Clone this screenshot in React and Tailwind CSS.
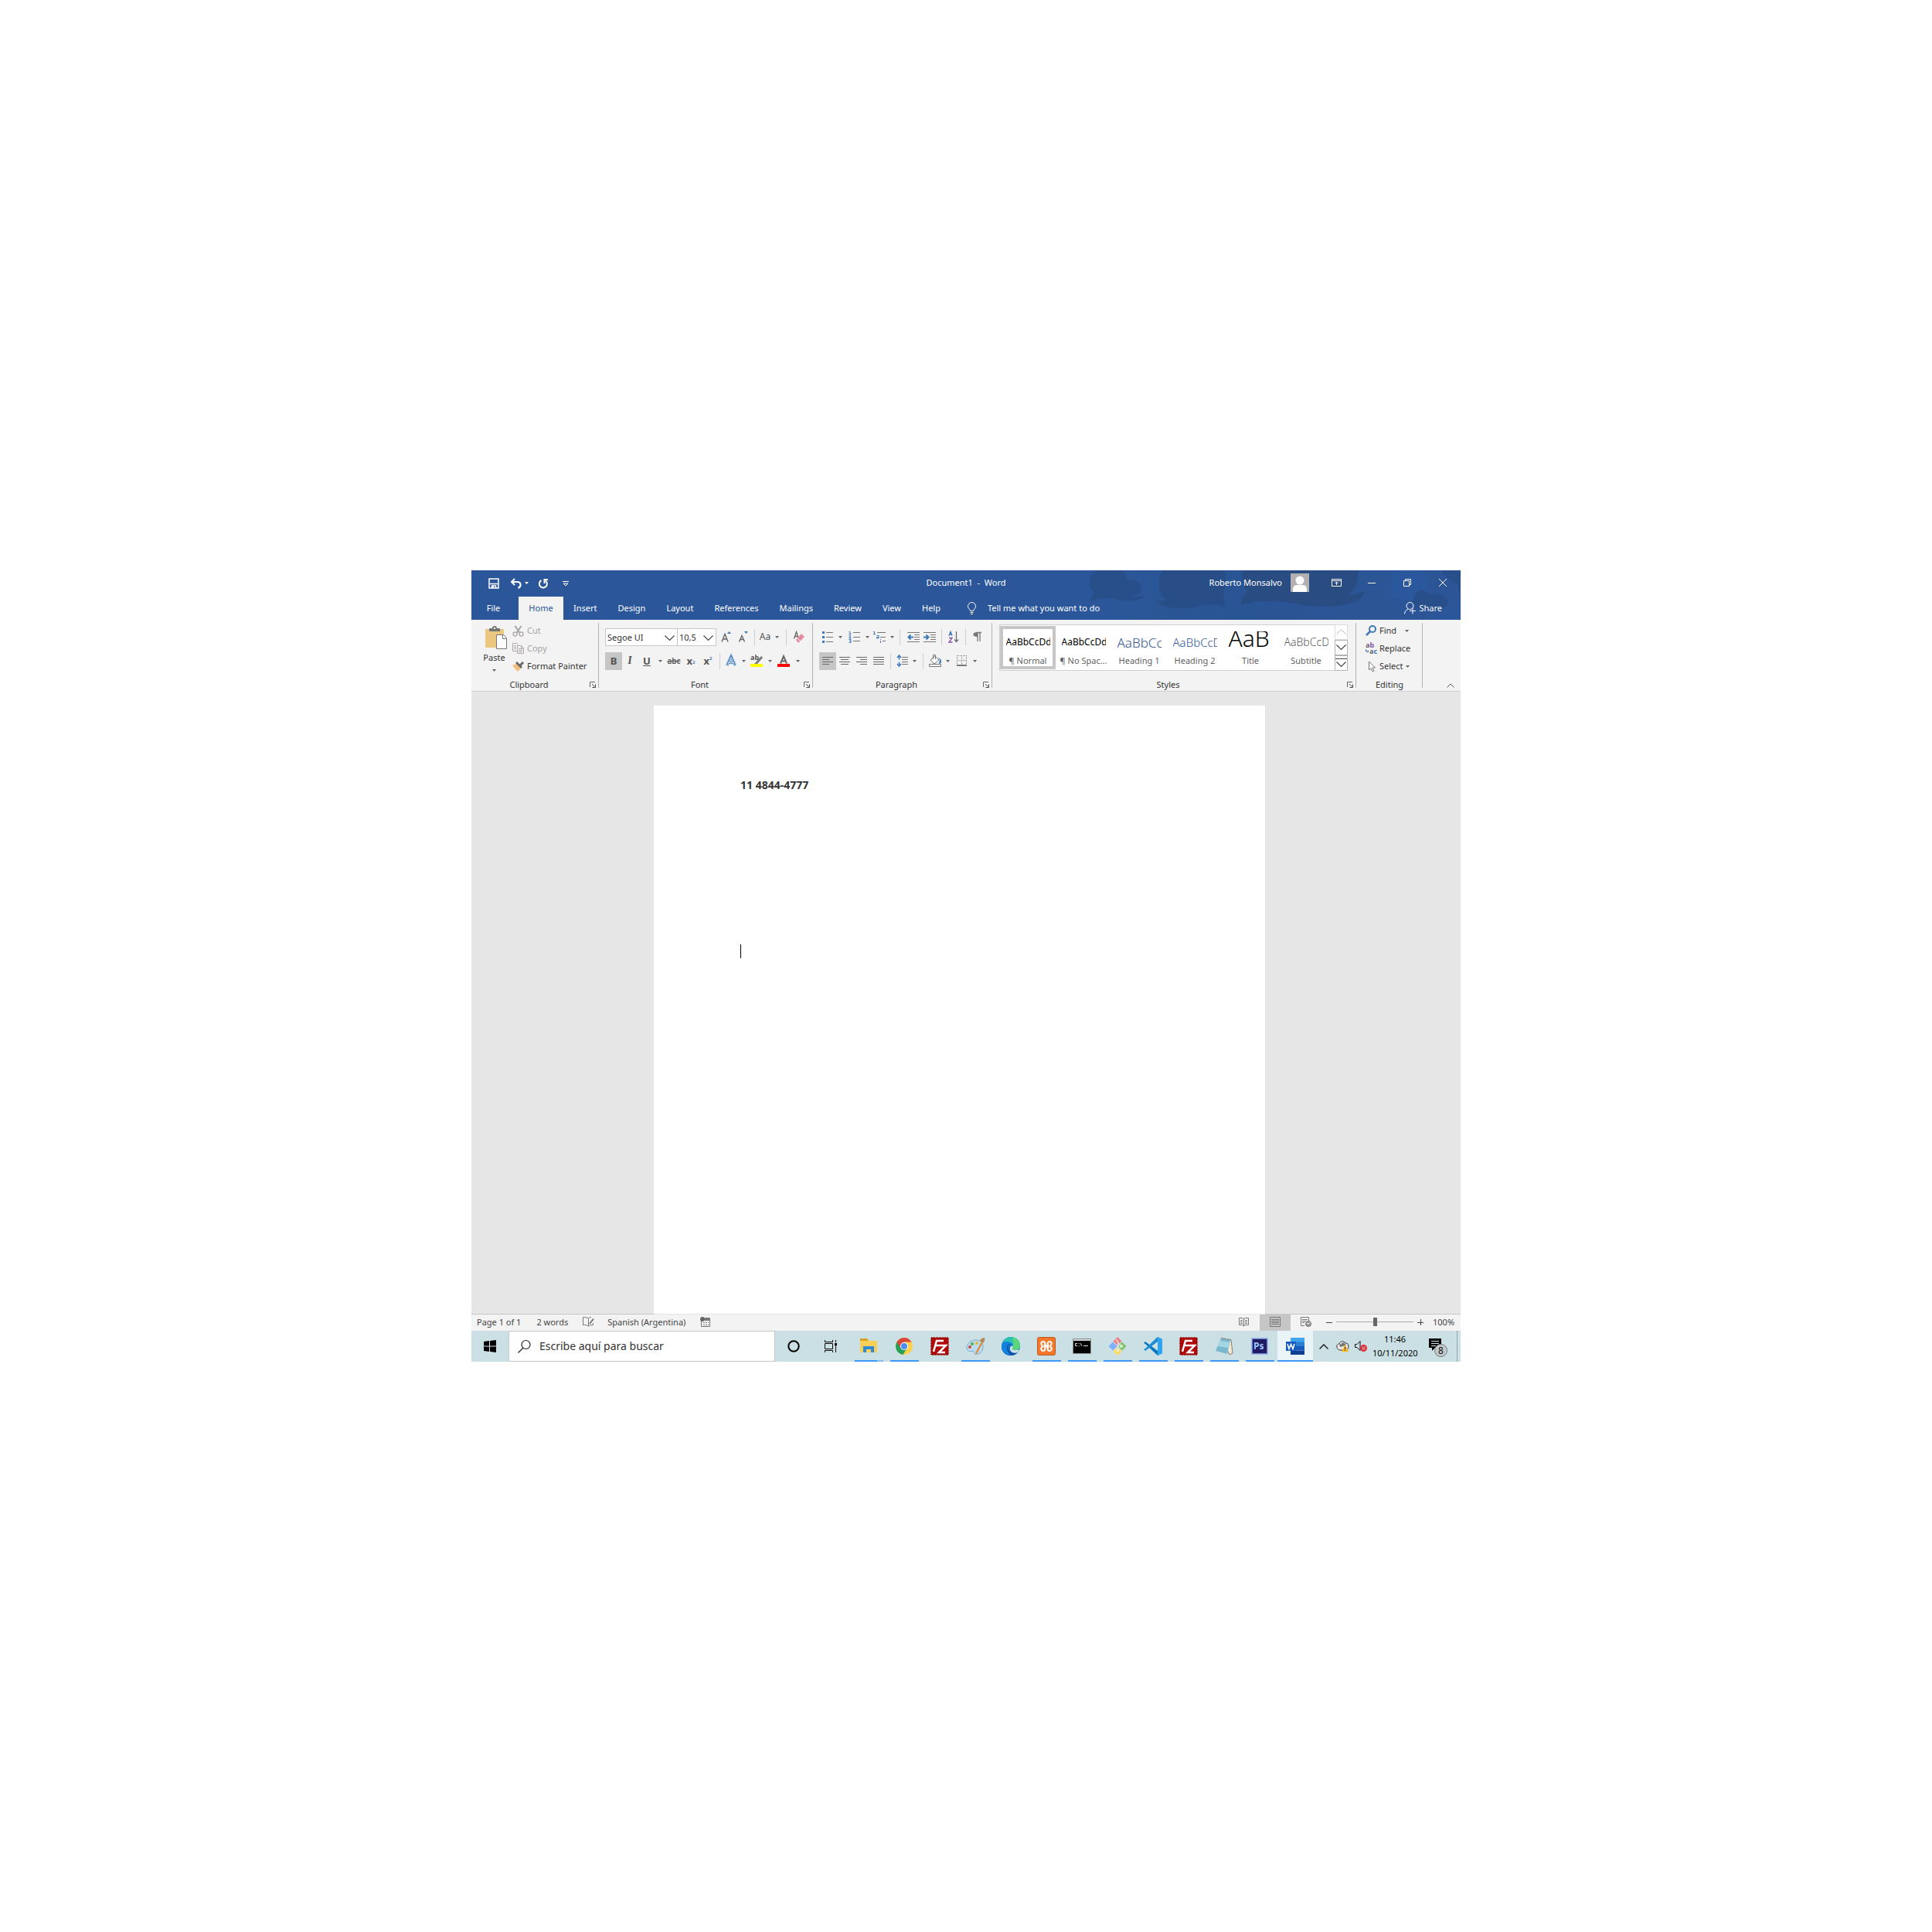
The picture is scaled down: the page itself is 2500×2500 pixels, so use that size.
import React from "react";

/* ---------- shared pieces ---------- */

function Svg({ w, h, children, className = "" }) {
  return (
    <svg width={w} height={h} viewBox={`0 0 ${w} ${h}`} fill="none" className={`shrink-0 overflow-visible ${className}`} aria-hidden="true">
      {children}
    </svg>
  );
}

function Btn({ label, className = "", children, ...rest }) {
  return (
    <button type="button" aria-label={label} className={`flex h-[23px] shrink-0 items-center justify-center pb-px ${className}`} {...rest}>
      {children}
    </button>
  );
}

const Caret = ({ color = "#666" }) => (
  <Svg w={5} h={3}><path d="M0 0h5L2.5 3z" fill={color} /></Svg>
);

const Rule = ({ className }) => (
  <span className={`flex h-[21px] shrink-0 justify-center ${className}`}>
    <span className="w-px bg-[#d0d0d0]" />
  </span>
);

function Group({ title, launcher = true, className = "", children }) {
  return (
    <section aria-label={title} className={`relative flex flex-col ${className}`}>
      <div className="h-[76px]">{children}</div>
      <div className="flex h-4 items-center">
        <span className="flex-1 text-center text-[#333]">{title}</span>
        {launcher && (
          <button type="button" aria-label={`${title} settings`} className="flex w-4 justify-start pl-1">
            <Svg w={8} h={8}>
              <path d="M.5 7V.5H7" stroke="#666" />
              <path d="M3 3l3.500 3.500M7.500 3.500v4h-4" stroke="#444" />
            </Svg>
          </button>
        )}
      </div>
      <span className="absolute right-0 top-1 h-[84px] w-px bg-[#b4b4b4]" />
    </section>
  );
}

/* ---------- title bar ---------- */

function HeaderArt() {
  return (
    <svg viewBox="0 0 490 64" width="490" height="64" className="pointer-events-none absolute right-0 top-0" aria-hidden="true">
      <defs>
        <linearGradient id="fade" x1="0" x2="1" y1="0" y2="0">
          <stop offset="0" stopColor="#2b579a" />
          <stop offset=".25" stopColor="#2a5595" />
          <stop offset="1" stopColor="#2b5596" />
        </linearGradient>
      </defs>
      <path d="M0 0h490v40L440 64H60z" fill="url(#fade)" />
      <path d="M20 0h33c4 4 5 8 5 13 8-1 19 1 19 10 0 7-7 10-14 11 6 1 12 0 18-1-4 5-15 7-28 6-14-3-28-5-42 1 1-6 3-8 6-11-6-3-8-10-7-17 1-6 5-10 10-12z" fill="#284f8a" />
      <path d="M104 0h80c5 12 1 25-1 32l2 16c-9-5-21-4-31-2-21 6-49 4-59-7 6 1 11 1 15 0-12-8-12-27-6-39z" fill="#294e87" />
      <path d="M208 0h150c0 12-2 25-15 33 11-1 17-4 23-6-2 8-8 13-17 15-20 6-42 6-64 3-26-6-56-8-79 0 1-8 3-13 9-17-8-7-9-18-7-28z" fill="#294c83" />
      <path d="M405 0h31c8 4 12 12 13 22 0 10-12 20-32 16l-17-2V15c1-6 2-11 5-15z" fill="#2b589c" />
      <path d="M430 33c3-8 15-9 20-2 9-1 20 1 23 8 0 8-7 12-15 12h-20c-8-2-12-10-8-18zM466 0h24v31c-3-3-4-9-3-14-7-1-17-7-21-17z" fill="#294f8b" />
    </svg>
  );
}

function TitleBar() {
  return (
    <div className="relative grid h-[34px] grid-cols-[1fr_auto_1fr] items-center pb-0.5">
      <div className="flex items-center pl-[22px] pt-px">
        <button type="button" aria-label="Save">
          <Svg w={14} h={14}>
            <path d="M1 1h12v12H1z" stroke="#fff" strokeWidth="1.500" />
            <path d="M2 7.500h10M4.500 13v-3h5v3" stroke="#fff" strokeWidth="1.500" />
            <path d="M5 10.500h2V13H5z" fill="#fff" />
          </Svg>
        </button>
        <button type="button" aria-label="Undo" className="ml-[14px]">
          <Svg w={15} h={14}>
            <path d="M2 5h7.500c5 0 5.500 6 1 8" stroke="#fff" strokeWidth="2" />
            <path d="M6 1L2 5l4 4" stroke="#fff" strokeWidth="2" />
          </Svg>
        </button>
        <button type="button" aria-label="Undo options" className="ml-1"><Caret color="#fff" /></button>
        <button type="button" aria-label="Redo" className="ml-3">
          <Svg w={14} h={14}>
            <path d="M4.500 3a5 5 0 1 0 5.500.5" stroke="#fff" strokeWidth="2" />
            <path d="M8.500 7V2H13" stroke="#fff" strokeWidth="2" />
          </Svg>
        </button>
        <button type="button" aria-label="Customize toolbar" className="ml-[18px]">
          <Svg w={8} h={8}><path d="M0 1.500h8M1 4l3 3 3-3z" stroke="#fff" /></Svg>
        </button>
      </div>
      <h1 className="whitespace-pre">Document1  -  Word</h1>
      <div className="flex items-center justify-end">
        <button type="button" className="flex items-center">
          Roberto Monsalvo
          <Svg w={24} h={24} className="ml-[11px] mr-3">
            <path d="M0 0h24v24H0z" fill="#b1b1b1" />
            <circle cx="12" cy="9" r="5.500" fill="#fff" />
            <path d="M3 24v-3c0-4 2-6 5-6h8c3 0 5 2 5 6v3z" fill="#fff" />
          </Svg>
        </button>
        <button type="button" aria-label="Ribbon display options" className="flex h-8 w-[46px] items-center justify-center">
          <Svg w={13} h={10}><path d="M.5.500h12v9H.5zM.5 2.500h12M6.500 8V4M4.500 6l2-2 2 2" stroke="#fff" /></Svg>
        </button>
        <button type="button" aria-label="Minimize" className="flex h-8 w-[46px] items-center justify-center">
          <Svg w={10} h={1}><path d="M0 0h10v1H0z" fill="#fff" /></Svg>
        </button>
        <button type="button" aria-label="Restore" className="flex h-8 w-[46px] items-center justify-center">
          <Svg w={10} h={10}><path d="M.5 2.500h7v7h-7zM2.500 2.500v-2h7v7h-2" stroke="#fff" /></Svg>
        </button>
        <button type="button" aria-label="Close" className="flex h-8 w-[46px] items-center justify-center">
          <Svg w={10} h={10}><path d="M0 0l10 10M10 0L0 10" stroke="#fff" /></Svg>
        </button>
      </div>
    </div>
  );
}

const TABS = ["Insert", "Design", "Layout", "References", "Mailings", "Review", "View", "Help"];

function TabBar() {
  return (
    <nav className="relative flex h-[30px] items-stretch">
      <button type="button" className="w-[61px] pr-1">File</button>
      <button type="button" className="w-[58px] bg-[#f3f3f3] text-[#2b579a]">Home</button>
      <div className="flex gap-px">
        {TABS.map((t) => (
          <button key={t} type="button" className="px-[13px]">{t}</button>
        ))}
      </div>
      <button type="button" className="ml-[22px] flex items-center gap-[15px]">
        <Svg w={11} h={16}>
          <path d="M3.500 11.500c0-2-3-3-3-6a5 5 0 0 1 10 0c0 3-3 4-3 6zM3.500 13.500h4M4 15.500h3" stroke="#fff" />
        </Svg>
        Tell me what you want to do
      </button>
      <button type="button" className="ml-auto mr-6 flex items-center gap-1">
        <Svg w={15} h={16}>
          <circle cx="7.500" cy="5" r="4.500" stroke="#fff" />
          <path d="M.5 15.500c0-3 2-5 4.500-6.500M11 7.500v8M7 11.500h8" stroke="#fff" />
        </Svg>
        Share
      </button>
    </nav>
  );
}

/* ---------- ribbon ---------- */

function Clipboard() {
  return (
    <Group title="Clipboard" className="w-[165px]">
      <div className="flex">
        <button type="button" className="flex w-[53px] flex-col items-center pl-1.5 pt-2 text-[#333]">
          <Svg w={28} h={30} className="ml-1">
            <path d="M0 4h24v24H0z" fill="#ecc77f" />
            <path d="M5 3h4a3 3 0 0 1 6 0h4v4H5z" fill="#767676" />
            <path d="M11 2h2v2h-2z" fill="#f3f3f3" />
            <path d="M14.500 11.500h9l4 4v14h-13z" fill="#fff" stroke="#777" />
            <path d="M22.500 11.500v5h5" stroke="#777" />
          </Svg>
          <span className="mt-[3px] leading-4">Paste</span>
          <span className="mt-[3px] pt-1"><Caret /></span>
        </button>
        <div className="flex flex-col items-start pt-[3px]">
          <Btn className="gap-1 text-[#a3a3a3]">
            <Svg w={15} h={15}>
              <path d="M3.500 1l6 9M11.500 1l-6 9" stroke="#a5a5a5" strokeWidth="2" />
              <circle cx="3.500" cy="11.500" r="2.500" stroke="#b0a8ab" strokeWidth="1.300" />
              <circle cx="11.500" cy="11.500" r="2.500" stroke="#b0a8ab" strokeWidth="1.300" />
            </Svg>
            Cut
          </Btn>
          <Btn className="gap-1 text-[#a3a3a3]">
            <Svg w={15} h={14}>
              <path d="M.5.500h5l2 2v8h-7z" stroke="#b0a8ab" />
              <path d="M2 3.500h3M2 5.500h3M2 7.500h3" stroke="#b0a8ab" />
              <path d="M6.500 3.500h5l3 3v7h-8z" fill="#f3f3f3" stroke="#b0a8ab" />
              <path d="M8 7.500h5M8 9.500h5M8 11.500h5M11.500 4v3h3" stroke="#b0a8ab" />
            </Svg>
            Copy
          </Btn>
          <Btn className="gap-1 text-[#333]">
            <Svg w={15} h={14}>
              <path d="M0 6l5-2 6 6-4 4-3-3z" fill="#f0bd7c" />
              <path d="M4 3l2-2 7 7-2 2z" fill="#666" />
              <path d="M9 5l4-4 2 2-4 4z" fill="#666" />
            </Svg>
            Format Painter
          </Btn>
        </div>
      </div>
    </Group>
  );
}

function Combo({ label, value, className }) {
  return (
    <div className={`relative flex h-[23px] shrink-0 border border-[#c8c8c8] bg-white ${className}`}>
      <select aria-label={label} className="w-full appearance-none bg-white pl-[2px] text-[#333] outline-none" defaultValue={value}>
        <option>{value}</option>
      </select>
      <Svg w={13} h={7} className="pointer-events-none absolute right-[3px] top-2">
        <path d="M.5.500l6 6 6-6" stroke="#444" strokeWidth="1.200" />
      </Svg>
    </div>
  );
}

function FontGroup() {
  return (
    <Group title="Font" className="w-[277px]">
      <div className="flex items-center pl-2 pt-[11px]">
        <Combo label="Font name" value="Segoe UI" className="w-[94px]" />
        <Combo label="Font size" value="10,5" className="-ml-px w-[51px]" />
        <Btn label="Increase font size" className="w-[25px]">
          <Svg w={13} h={14}>
            <path d="M1 13.500L5 3.500l4 10M2.500 10h5" stroke="#666" strokeWidth="1.400" />
            <path d="M8 3l2.500-3L13 3z" fill="#3f79b7" />
          </Svg>
        </Btn>
        <Btn label="Decrease font size" className="w-[20px]">
          <Svg w={12} h={14}>
            <path d="M.5 13.500L4 5.500l3.500 8M2 10.500h4" stroke="#666" strokeWidth="1.400" />
            <path d="M7 0h5L9.500 3z" fill="#3f79b7" />
          </Svg>
        </Btn>
        <Rule className="w-[9px]" />
        <Btn className="w-[18px] text-xs text-[#555]">Aa</Btn>
        <Btn label="Change case options" className="w-[12px]"><Caret /></Btn>
        <Rule className="w-[13px]" />
        <Btn label="Clear formatting" className="w-5">
          <Svg w={14} h={15}>
            <path d="M.5 9.500L3.500 .500l3 9M1.500 6.500h4" stroke="#666" strokeWidth="1.300" />
            <path d="M3 11l7-8 4 4-8 8z" fill="#e68a9c" />
            <path d="M5 9l4 4" stroke="#fff" />
          </Svg>
        </Btn>
      </div>
      <div className="flex items-center pl-2 pt-2 text-[#555]">
        <Btn className="w-[22px] bg-[#c6c6c6] text-[13px] font-bold">B</Btn>
        <Btn className="w-5 font-serif text-[14px] font-bold italic">I</Btn>
        <Btn className="w-6 text-[13px] font-bold underline">U</Btn>
        <Btn label="Underline options" className="w-2.5"><Caret /></Btn>
        <Btn className="w-[26px] text-[10px] font-semibold line-through">abc</Btn>
        <Btn label="Subscript" className="w-[18px] text-[13px] font-bold">x<sub className="text-[6px] text-[#3f79b7]">2</sub></Btn>
        <Btn label="Superscript" className="w-[26px] text-[13px] font-bold">x<sup className="text-[6px] text-[#3f79b7]">2</sup></Btn>
        <Rule className="w-[5px]" />
        <Btn label="Text effects" className="w-6">
          <Svg w={14} h={14}>
            <path d="M1.500 13L7 1l5.500 12M4 9.500h6" stroke="#b8d2ec" strokeWidth="4" />
            <path d="M2 13L7 1.500 12 13M4 9.500h6" stroke="#3f79b7" strokeWidth="2.600" />
            <path d="M2.500 12.500L7 2.500l4.500 10M4 9.500h6" stroke="#fff" strokeWidth=".8" />
          </Svg>
        </Btn>
        <Btn label="Text effects options" className="w-2"><Caret /></Btn>
        <Btn label="Highlight" className="w-[26px]">
          <Svg w={16} h={16}>
            <text x="0" y="7" fontSize="9" fontWeight="bold" fill="#555">ab</text>
            <path d="M6 11l8-9 2 2-7 8-4 0z" fill="#777" />
            <path d="M0 12h16v4H0z" fill="#ff0" />
          </Svg>
        </Btn>
        <Btn label="Highlight options" className="w-2"><Caret /></Btn>
        <Btn label="Font color" className="w-7">
          <Svg w={16} h={15}>
            <path d="M4 10.500L8 1l4 9.500M5.500 7.500h5" stroke="#666" strokeWidth="2" />
            <path d="M0 11h16v4H0z" fill="#f00" />
          </Svg>
        </Btn>
        <Btn label="Font color options" className="w-2"><Caret /></Btn>
      </div>
    </Group>
  );
}

const AlignIcon = ({ d }) => <Svg w={14} h={11}><path d={d} stroke="#666" /></Svg>;

const IndentIcon = ({ arrow }) => (
  <Svg w={16} h={13}>
    <path d="M0 .500h16M9 3.500h7M9 6.500h7M9 9.500h7M0 12.500h16" stroke="#777" />
    <path d={arrow} stroke="#3f79b7" strokeWidth="2" />
  </Svg>
);

function Paragraph() {
  return (
    <Group title="Paragraph" className="w-[232px]">
      <div className="flex items-center pl-2 pt-[11px]">
        <Btn label="Bullets" className="w-[22px]">
          <Svg w={14} h={15}>
            <path d="M0 0h3v3H0zM0 6h3v3H0zM0 12h3v3H0z" fill="#3f79b7" />
            <path d="M5 1.500h9M5 7.500h9M5 13.500h9" stroke="#777" />
          </Svg>
        </Btn>
        <Btn label="Bullets options" className="w-2.5"><Caret /></Btn>
        <Btn label="Numbering" className="w-[26px]">
          <Svg w={15} h={16}>
            <path d="M.5 1.500H2V5M.5 4.500h3M.5 6.500h2v2H1v1.500h2.500M.5 11.500h2.500v4H.5M1 13.500h2" stroke="#3f79b7" />
            <path d="M6 2.500h9M6 8.500h9M6 13.500h9" stroke="#777" />
          </Svg>
        </Btn>
        <Btn label="Numbering options" className="w-2"><Caret /></Btn>
        <Btn label="Multilevel list" className="w-6">
          <Svg w={17} h={16}>
            <path d="M0 1.500h1.500V5M0 4.500h3M4.500 6.500h2.500V10H4.500V8.500h2M9.500 11v1M9.500 13v3" stroke="#3f79b7" />
            <path d="M5 2.500h11M9 8.500h7M12 13.500h4" stroke="#777" />
          </Svg>
        </Btn>
        <Btn label="Multilevel options" className="w-2"><Caret /></Btn>
        <Rule className="w-[13px]" />
        <Btn label="Decrease indent" className="w-[21px]"><IndentIcon arrow="M8 6.500H1.500M4.500 3.500l-3 3 3 3" /></Btn>
        <Btn label="Increase indent" className="w-[22px]"><IndentIcon arrow="M0 6.500h6.500M3.500 3.500l3 3-3 3" /></Btn>
        <Rule className="w-[9px]" />
        <Btn label="Sort" className="w-[22px]">
          <Svg w={14} h={16}>
            <path d="M1 6.500L3 1.500l2 5M1.500 5h3" stroke="#3f79b7" strokeWidth="1.400" />
            <path d="M1 9.500h4L1 15h4.500" stroke="#8a56a8" strokeWidth="1.400" />
            <path d="M10.500 1v13M8 11.500l2.500 3 2.500-3" stroke="#666" strokeWidth="1.200" />
          </Svg>
        </Btn>
        <Rule className="w-2" />
        <Btn label="Show paragraph marks" className="w-[22px]">
          <Svg w={11} h={12}>
            <path d="M5 .500h6M6 0v12M9 0v12" stroke="#777" strokeWidth="1.300" />
            <path d="M6 0v6C2 6 .500 5 .500 3S2 0 6 0z" fill="#777" />
          </Svg>
        </Btn>
      </div>
      <div className="flex items-center pl-2 pt-2">
        <Btn label="Align left" className="w-[22px] bg-[#c6c6c6]"><AlignIcon d="M0 .500h14M0 3.500h9M0 6.500h14M0 9.500h9" /></Btn>
        <Btn label="Center" className="w-[22px]"><AlignIcon d="M0 .500h14M2 3.500h10M0 6.500h14M2 9.500h10" /></Btn>
        <Btn label="Align right" className="w-[22px]"><AlignIcon d="M0 .500h14M5 3.500h9M0 6.500h14M5 9.500h9" /></Btn>
        <Btn label="Justify" className="w-[22px]"><AlignIcon d="M0 .500h14M0 3.500h14M0 6.500h14M0 9.500h14" /></Btn>
        <Rule className="w-[9px]" />
        <Btn label="Line spacing" className="w-[22px]">
          <Svg w={14} h={16}>
            <path d="M2.500 1v5.500M2.500 9.500V15M0 4l2.500-3L5 4M0 12l2.500 3L5 12" stroke="#3f79b7" strokeWidth="1.500" />
            <path d="M6 3.500h8M6 6.500h8M6 9.500h8M6 12.500h8" stroke="#777" />
          </Svg>
        </Btn>
        <Btn label="Line spacing options" className="w-2"><Caret /></Btn>
        <Rule className="w-[15px]" />
        <Btn label="Shading" className="w-4">
          <Svg w={16} h={16}>
            <path d="M2 7l6-5 5 5-6 5z" fill="#fff" stroke="#777" />
            <path d="M5.500 6V.500h3V6" stroke="#777" />
            <path d="M12 4c3 1 4 3 4 5s-1 3-3 3l1-5z" fill="#3f79b7" />
            <path d="M.5 12.500h15v3H.5z" fill="#fff" stroke="#777" />
          </Svg>
        </Btn>
        <Btn label="Shading options" className="w-[17px]"><Caret /></Btn>
        <Btn label="Borders" className="w-[18px]">
          <Svg w={13} h={14}>
            <path d="M.5 0v13M6.500 0v13M12.500 0v13M0 .500h13M0 6.500h13" stroke="#777" strokeDasharray="1 1" />
            <path d="M0 13h13" stroke="#555" strokeWidth="1.500" />
          </Svg>
        </Btn>
        <Btn label="Borders options" className="w-4"><Caret /></Btn>
      </div>
    </Group>
  );
}

const STYLES = [
  { name: "¶ Normal", sample: "AaBbCcDd", cls: "text-[12px] leading-none text-black", on: true },
  { name: "¶ No Spac...", sample: "AaBbCcDd", cls: "text-[12px] leading-none text-black" },
  { name: "Heading 1", sample: "AaBbCc", cls: "text-[17px] leading-none font-light text-[#2f5496]" },
  { name: "Heading 2", sample: "AaBbCcD", cls: "text-[15px] leading-none font-light text-[#2f5496]" },
  { name: "Title", sample: "AaB", cls: "self-start text-[30px] leading-[17px] font-light text-black" },
  { name: "Subtitle", sample: "AaBbCcD", cls: "text-[14px] leading-none font-light text-[#5a5a5a]" },
];

function Styles() {
  return (
    <Group title="Styles" className="min-w-0 flex-1">
      <div className="pl-[9px] pr-[11px] pt-[6px]">
        <div className="flex h-[60px] border border-[#d0d0d0] bg-white">
          <div className="flex min-w-0 flex-1 overflow-hidden">
            {STYLES.map((s) => (
              <button
                key={s.name}
                type="button"
                className={`my-px flex w-[72px] shrink-0 flex-col items-center border-4 ${s.on ? "border-[#c6c6c6]" : "border-transparent"}`}
              >
                <span className="mt-[3px] flex h-7 w-[57px] items-center overflow-hidden">
                  <span className={s.cls}>{s.sample}</span>
                </span>
                <span className="mt-0.5 whitespace-nowrap leading-[15px] text-[#5f5f5f]">{s.name}</span>
              </button>
            ))}
          </div>
          <div className="-my-px -mr-px flex w-[17px] flex-col">
            <Btn label="Previous styles" className="h-5 flex-1 border border-[#dcdcdc]">
              <Svg w={13} h={7}><path d="M.5 6.500l6-6 6 6" stroke="#bbb" /></Svg>
            </Btn>
            <Btn label="Next styles" className="flex-1 border border-[#b4b4b4]">
              <Svg w={13} h={7}><path d="M.5.500l6 6 6-6" stroke="#444" strokeWidth="1.200" /></Svg>
            </Btn>
            <Btn label="More styles" className="flex-1 border border-[#b4b4b4]">
              <Svg w={15} h={12}><path d="M0 .500h15M1.500 4.500l6 6 6-6" stroke="#444" strokeWidth="1.200" /></Svg>
            </Btn>
          </div>
        </div>
      </div>
    </Group>
  );
}

function Editing() {
  return (
    <Group title="Editing" launcher={false} className="w-[86px]">
      <div className="flex flex-col items-start pl-3 pt-[3px] text-[#333]">
        <Btn className="gap-[3px]">
          <Svg w={15} h={14}>
            <circle cx="9" cy="5" r="4" stroke="#3f79b7" strokeWidth="2" />
            <path d="M6 8l-5 5" stroke="#3f79b7" strokeWidth="2.500" />
          </Svg>
          Find
          <span className="pl-2"><Caret /></span>
        </Btn>
        <Btn className="gap-[3px]">
          <Svg w={15} h={16}>
            <text x="0" y="7" fontSize="9" fontWeight="bold" fill="#666">a<tspan fill="#8a56a8">b</tspan></text>
            <text x="5" y="15" fontSize="9" fontWeight="bold" fill="#666">a<tspan fill="#3f79b7">c</tspan></text>
            <path d="M.5 9v3h3M2.500 10.500l1.500 1.500-1.500 1.500" stroke="#3f79b7" />
          </Svg>
          Replace
        </Btn>
        <Btn className="gap-[3px]">
          <Svg w={15} h={15}>
            <path d="M4.500 1v11l2.500-2.500 2 4.500 2-1-2-4h3.500z" fill="#fff" stroke="#777" />
          </Svg>
          Select
          <Caret />
        </Btn>
      </div>
    </Group>
  );
}

function Ribbon() {
  return (
    <div className="flex h-[93px] border-b border-[#d0d0d0] bg-[#f3f3f3]">
      <Clipboard />
      <FontGroup />
      <Paragraph />
      <Styles />
      <Editing />
      <div className="flex w-[49px] items-end justify-end pb-1 pr-2">
        <button type="button" aria-label="Collapse the ribbon">
          <Svg w={10} h={6}><path d="M.5 5.500L5 1l4.500 4.500" stroke="#555" /></Svg>
        </button>
      </div>
    </div>
  );
}

/* ---------- document ---------- */

function Document() {
  return (
    <main className="flex flex-1 justify-center border-b border-[#c6c6c6] bg-[#e6e6e6] pr-[17px] pt-[18px]">
      <article className="-mb-px w-[791px] max-w-full border-b border-[#e6e6e6] bg-white px-28">
        <p className="pt-[94px] text-[14px] font-bold leading-[18px] text-[#333]">11 4844-4777</p>
        <span className="mt-[197px] block h-[18px] w-px bg-black" />
      </article>
    </main>
  );
}

/* ---------- status bar ---------- */

function StatusBar() {
  return (
    <footer className="flex h-[21px] items-center bg-[#f3f3f3] pb-0.5 pl-[7px] pr-2 text-[#444]">
      <span>Page 1 of 1</span>
      <span className="ml-5">2 words</span>
      <Svg w={15} h={13} className="ml-[19px]">
        <path d="M7.500 2.500v9M7.500 2C5.500.500 3 .500.500.500v10c3 0 5 0 7 1.500 1-1 3-1.500 6-1.500V8M7.500 2c1-1 2-1.500 3.500-1.500" stroke="#777" />
        <path d="M9 9l5-6.500" stroke="#777" strokeWidth="2" />
      </Svg>
      <span className="ml-[17px]">Spanish (Argentina)</span>
      <Svg w={13} h={13} className="ml-[19px]">
        <path d="M1.500 5v7.500h11v-11H6" stroke="#777" />
        <path d="M6 2h7v3H6z" fill="#777" />
        <circle cx="3" cy="3" r="3" fill="#666" />
        <path d="M4 7.500h7M4 10.500h7" stroke="#777" strokeDasharray="2 1" />
      </Svg>
      <button type="button" aria-label="Read mode" className="ml-auto mr-[14px]">
        <Svg w={13} h={13}>
          <path d="M6.500 2v10.500M.5 1.500h4l2 1 2-1h4v9h-4l-2 1-2-1h-4z" stroke="#777" />
          <path d="M2 4.500h3M2 6.500h3M2 8.500h3M8 4.500h3M8 6.500h3M8 8.500h3" stroke="#777" />
        </Svg>
      </button>
      <button type="button" aria-label="Print layout" className="flex h-[21px] w-10 items-center justify-center self-start bg-[#c6c6c6] pb-0.5">
        <Svg w={14} h={13}>
          <path d="M.5.500h13v12H.5z" stroke="#777" />
          <path d="M2 3.500h10M2 5.500h10M2 7.500h10M2 9.500h10" stroke="#777" />
        </Svg>
      </button>
      <button type="button" aria-label="Web layout" className="ml-[13px]">
        <Svg w={14} h={13}>
          <path d="M5 11.500H.5V.500h10v5" stroke="#777" />
          <path d="M2 3.500h7M2 5.500h5M2 7.500h3" stroke="#777" />
          <circle cx="10" cy="9" r="3.500" fill="#999" stroke="#777" />
          <path d="M8 8l2 1 2-1.500" stroke="#fff" />
        </Svg>
      </button>
      <button type="button" aria-label="Zoom out" className="ml-[19px]"><Svg w={8} h={8}><path d="M0 4.500h8" stroke="#444" /></Svg></button>
      <input
        type="range"
        aria-label="Zoom"
        min="0"
        max="200"
        defaultValue="100"
        className="mx-[5px] h-[11px] w-[100px] appearance-none bg-[linear-gradient(#aaa,#aaa)] bg-[length:100%_1px] bg-center bg-no-repeat [&::-webkit-slider-thumb]:h-[11px] [&::-webkit-slider-thumb]:w-[5px] [&::-webkit-slider-thumb]:appearance-none [&::-webkit-slider-thumb]:bg-[#666]"
      />
      <button type="button" aria-label="Zoom in"><Svg w={8} h={8}><path d="M0 4.500h8M4.500 0v8" stroke="#444" /></Svg></button>
      <button type="button" className="ml-3 w-7 text-left">100%</button>
    </footer>
  );
}

/* ---------- taskbar ---------- */

const Explorer = (
  <Svg w={22} h={20}>
    <path d="M0 1h9l2 2h11v15H0z" fill="#f9cf57" />
    <path d="M0 0h9l2 3H0z" fill="#dba01c" />
    <path d="M4 10h14v8h-4v-4H8v4H4z" fill="#2f8bd8" />
  </Svg>
);
const Chrome = (
  <Svg w={22} h={22}>
    <circle cx="11" cy="11" r="11" fill="#fdd04b" />
    <path d="M11 11L1.500 5.500A11 11 0 0 0 9.500 22l5.500-9z" fill="#26a05a" />
    <path d="M1.500 5.500A11 11 0 0 1 20.500 5.500H11L6 13z" fill="#d9483b" />
    <circle cx="11" cy="11" r="5" fill="#fff" />
    <circle cx="11" cy="11" r="4" fill="#4a8bf4" />
  </Svg>
);
const FileZilla = (
  <Svg w={24} h={24}>
    <path d="M1 1h22v22H1z" fill="#b30808" stroke="#8d0000" strokeWidth="2" strokeDasharray="1 1" />
    <path d="M4 19L8 5h9M6 11h7M12 11h8l-9 9h8" stroke="#fff" strokeWidth="2.500" />
  </Svg>
);
const Paint = (
  <Svg w={25} h={24}>
    <path d="M1 15C0 9 6 4 13 4c6 0 9 4 9 9 0 6-5 10-10 9-3-1-1-4-4-4-3 1-6 1-7-3z" fill="#b9dcef" stroke="#7da9c4" />
    <circle cx="5" cy="13" r="2" fill="#d9453a" />
    <circle cx="8" cy="9" r="2" fill="#5aae4a" />
    <circle cx="14" cy="8" r="2" fill="#e6b93a" />
    <path d="M12 23l1-4 7-13 2 1-7 13z" fill="#e18a33" />
    <path d="M18 5c1-3 4-4 6-4 1 2 0 5-2 7z" fill="#b98a5c" />
  </Svg>
);
const Edge = (
  <Svg w={24} h={24}>
    <circle cx="12" cy="12" r="12" fill="#0f70c4" />
    <path d="M1 8C3 2 8 0 12 0c7 0 12 5 12 11 0 4-3 6-7 6-3 0-4-2-2-4C14 8 7 5 1 8z" fill="#2cc0b0" />
    <path d="M14 0c6 1 10 6 10 11 0 4-3 6-7 6-3 0-4-2-2-4 1-4 0-9-1-13z" fill="#5cd67a" />
    <path d="M0 12c1-5 8-6 12-3-4 0-5 4-3 8 2 4 7 5 12 3-3 3-7 4-10 4C5 24 0 19 0 12z" fill="#0a4fa3" />
    <path d="M0 12c0-4 3-6 6-6 5 0 9 2 9 6-2-4-7-4-8 0-1 5 2 9 5 12C5 24 0 19 0 12z" fill="#1283dd" />
    <path d="M15 13c-2 2-1 4 2 4 2 0 4 0 6-1l-2 4c-6 2-11-1-10-6 1-3 3-3 4-1z" fill="#cce1e7" />
  </Svg>
);
const Xampp = (
  <Svg w={24} h={24}>
    <rect x=".5" y=".5" width="23" height="23" rx="2" fill="#f5782a" stroke="#b65c22" />
    <g stroke="#fff" strokeWidth="2.200">
      <path d="M9.500 10.500C11 9 10.500 6 8 6S4.500 9 6 10.500c1 .8 1 2.200 0 3C4.500 15 5.500 18 8 18s3-3 1.500-4.500" />
      <path d="M14.500 10.500C13 9 13.500 6 16 6s3.500 3 2 4.500c-1 .8-1 2.200 0 3 1.500 1.500.5 4.500-2 4.500s-3-3-1.500-4.500" />
      <path d="M8.500 12h7" strokeWidth="3.500" />
    </g>
  </Svg>
);
const Cmd = (
  <Svg w={24} h={20}>
    <path d="M.5.500h23v19H.5z" fill="#000" stroke="#8a8f92" />
    <path d="M1 1h22v2H1z" fill="#cfd4d6" />
    <path d="M6 6.500H3.500v3H6M8 6v1M8 9v1M10 6l2 4M14 9.500h6" stroke="#ddd" />
  </Svg>
);
const Git = (
  <Svg w={24} h={24}>
    <path d="M12 0l5.500 5.500L12 11 6.500 5.500z" fill="#f27c7c" />
    <path d="M6 6.500L11.500 12 6 17.500.500 12z" fill="#7fb0ff" />
    <path d="M18 6.500l5.500 5.500-5.500 5.500-5.500-5.500z" fill="#7bc46a" />
    <path d="M12 13l5.500 5.500L12 24l-5.500-5.500z" fill="#fbdc5e" />
    <path d="M10 3l3 4v10M13 8l4 4" stroke="#d9e6e4" strokeWidth="1.500" />
    <circle cx="12" cy="17" r="2" fill="#e8eee0" />
    <circle cx="17" cy="12" r="2" fill="#e0ecd9" />
  </Svg>
);
const Code = (
  <Svg w={24} h={24}>
    <path d="M18 0l6 3v18l-6 3L2 9l-2-1 2-2 16 12z" fill="#0b76bd" />
    <path d="M18 0L2 15l-2 1 2 2 16-12z" fill="#1b8bd6" />
    <path d="M18 0l6 3v18l-6 3z" fill="#2ea3ee" />
  </Svg>
);
const Notepad = (
  <Svg w={24} h={24}>
    <path d="M9 2l12 2 2 17-4 2z" fill="#f2ead9" stroke="#8f7a5c" />
    <path d="M8 2l12 2-4 18-15-4z" fill="#79b9cf" />
    <path d="M7 5l12 2-2 7L3 12z" fill="#a4d6e3" />
    <path d="M8 1.500l13 2" stroke="#888" strokeWidth="1.500" strokeDasharray="1 1" />
  </Svg>
);
const Photoshop = (
  <Svg w={22} h={22}>
    <path d="M1 1h20v20H1z" fill="#1f1a63" stroke="#8ea9e8" strokeWidth="1.500" />
    <text x="3" y="15" fontSize="12" fontWeight="bold" fill="#9cc7ff">Ps</text>
  </Svg>
);
const Word = (
  <Svg w={24} h={22}>
    <path d="M6 0h18v6H6z" fill="#41a5ee" />
    <path d="M6 5.500h18V11H6z" fill="#2b7cd3" />
    <path d="M6 11h18v5.500H6z" fill="#185abd" />
    <path d="M6 16.500h18V22H6z" fill="#103f91" />
    <path d="M0 5h13v12H0z" fill="#185abd" />
    <path d="M2 8l2 6.500 2.500-6 2.500 6L11 8" stroke="#fff" strokeWidth="1.600" />
  </Svg>
);

const APPS = [
  { name: "File Explorer", icon: Explorer, open: true, stacked: true },
  { name: "Chrome", icon: Chrome, open: true },
  { name: "FileZilla", icon: FileZilla },
  { name: "Paint", icon: Paint, open: true },
  { name: "Edge", icon: Edge },
  { name: "XAMPP", icon: Xampp, open: true },
  { name: "Command Prompt", icon: Cmd, open: true },
  { name: "Git Bash", icon: Git, open: true },
  { name: "Visual Studio Code", icon: Code, open: true },
  { name: "FileZilla Server", icon: FileZilla, open: true },
  { name: "Notepad", icon: Notepad, open: true },
  { name: "Photoshop", icon: Photoshop, open: true },
  { name: "Word", icon: Word, active: true },
];

function Taskbar() {
  return (
    <div className="flex h-10 items-stretch bg-[#cbe0e5] text-black">
      <button type="button" aria-label="Start" className="flex w-12 items-center justify-center">
        <Svg w={16} h={16}>
          <path d="M0 2l7-1v6.500H0zM8 1l8-1v7.500H8zM0 8.500h7V15l-7-1zM8 8.500h8V16l-8-1z" fill="#000" />
        </Svg>
      </button>
      <label className="flex min-w-0 flex-1 items-center border border-[#c4c8ca] bg-white pl-[11px]">
        <Svg w={17} h={17}>
          <circle cx="10.500" cy="6" r="5.500" stroke="#222" strokeWidth="1.200" />
          <path d="M7 10L.500 16.500" stroke="#222" strokeWidth="1.200" />
        </Svg>
        <input type="search" aria-label="Buscar" placeholder="Escribe aquí para buscar" className="ml-[11px] w-full bg-transparent text-[14px] outline-none placeholder:text-[#333]" />
      </label>
      <button type="button" aria-label="Cortana" className="flex w-12 items-center justify-center">
        <Svg w={16} h={16}><circle cx="8" cy="8" r="6.700" stroke="#000" strokeWidth="2" /></Svg>
      </button>
      <button type="button" aria-label="Task view" className="flex w-12 items-center justify-center">
        <Svg w={16} h={16}>
          <path d="M.5 0v2.500h10V0M.5 4.500h10v7H.5zM.5 16v-2.500h10V16M14.500 0v3M14.500 7v9" stroke="#000" />
          <path d="M13 4h3v3h-3z" fill="#000" />
        </Svg>
      </button>
      <div className="ml-0.5 flex">
        {APPS.map((a) => (
          <button
            key={a.name}
            type="button"
            aria-label={a.name}
            className={`flex w-[46px] flex-col items-center ${a.active ? "bg-[#eaf4f8]" : ""}`}
          >
            <span className="flex flex-1 items-center pt-0.5">{a.icon}</span>
            <span className={`flex h-0.5 ${a.active ? "w-full bg-[#3e98f7]" : a.open ? "w-[37px] bg-[#3e98f7]" : "w-0"}`}>
              {a.stacked && <span className="ml-auto w-2 bg-[#86bdf3]" />}
            </span>
          </button>
        ))}
      </div>
      <div className="ml-2 flex items-center">
        <button type="button" aria-label="Show hidden icons">
          <Svg w={12} h={7}><path d="M.5 6.500L6 1l5.500 5.500" stroke="#111" strokeWidth="1.300" /></Svg>
        </button>
        <button type="button" aria-label="OneDrive" className="ml-2.5">
          <Svg w={16} h={14}>
            <path d="M1 8c-1-3 2-4 3-4 1-4 7-4 8-1 3 0 4 2 4 5s-3 4-5 4H5c-2 0-4-2-4-4z" fill="#e9e9e9" stroke="#333" />
            <path d="M4 5l6-3 3 4-8 2z" fill="#777" />
            <path d="M11.500 5l4.500 9H7z" fill="#fcb817" />
            <path d="M11.500 8v3M11.500 12v1" stroke="#222" />
          </Svg>
        </button>
        <button type="button" aria-label="Volume" className="ml-2">
          <Svg w={16} h={14}>
            <path d="M.5 4.500H3l4-4v12l-4-4H.5z" stroke="#111" />
            <circle cx="11.500" cy="9.500" r="4.500" fill="#dd2c35" />
            <path d="M9.500 7.500l4 4M13.500 7.500l-4 4" stroke="#fff" />
          </Svg>
        </button>
        <time className="ml-[7px] w-[58px] text-center leading-[18px]" dateTime="2020-11-10T11:46">
          <span className="block">11:46</span>
          <span className="block">10/11/2020</span>
        </time>
        <button type="button" aria-label="Notifications" className="ml-[15px] mt-1 flex">
          <Svg w={24} h={24}>
            <path d="M0 0h16v12H8l-4 4v-4H0z" fill="#000" />
            <path d="M3 3.500h10M3 6.500h10M3 9.500h6" stroke="#cbe0e5" />
            <circle cx="15.500" cy="15.500" r="8" fill="#c3c8cb" stroke="#777" />
            <text x="12" y="20" fontSize="12" fill="#111">8</text>
          </Svg>
        </button>
        <button type="button" aria-label="Show desktop" className="ml-3 h-10 w-[5px] border-l border-[#92a5ab]" />
      </div>
    </div>
  );
}

export default function App() {
  return (
    <div className="flex min-h-screen items-center justify-center bg-white">
      <div className="flex aspect-[5/4] w-full max-w-7xl flex-col overflow-hidden font-['Noto_Sans',sans-serif] text-[11px] leading-4">
        <header className="relative bg-[#2b579a] text-white">
          <HeaderArt />
          <TitleBar />
          <TabBar />
        </header>
        <Ribbon />
        <Document />
        <StatusBar />
        <Taskbar />
      </div>
    </div>
  );
}
